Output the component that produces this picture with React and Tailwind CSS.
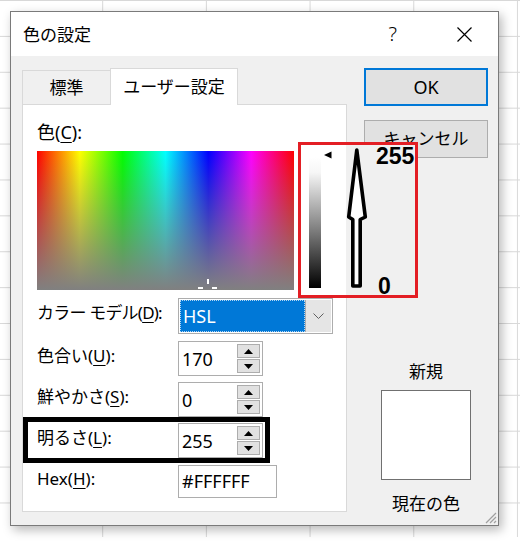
import React from "react";

const ui = "font-['Noto_Sans','Noto_Sans_CJK_JP',sans-serif]";

const Spin = () => (
	<div className="flex flex-col gap-[1px]">
		<div className="w-[23px] h-[14px] bg-[#e1e1e1] border border-[#adadad] flex items-center justify-center">
			<svg width="9" height="5" viewBox="0 0 9 5"><path d="M4.5 0L9 5H0Z" fill="#000" /></svg>
		</div>
		<div className="w-[23px] h-[14px] bg-[#e1e1e1] border border-[#adadad] flex items-center justify-center">
			<svg width="9" height="5" viewBox="0 0 9 5"><path d="M0 0H9L4.5 5Z" fill="#000" /></svg>
		</div>
	</div>
);

const NumField = ({ value }) => (
	<div className="w-[85px] h-[35px] bg-white border border-[#adadad] flex items-center pl-[3px] pr-[2px]">
		<span className="flex-1 text-[18px] leading-none">{value}</span>
		<Spin />
	</div>
);

const Label = ({ before, ul, after = "):", tight }) => (
	<div className={tight ? "w-[141px] text-[17px] tracking-[-0.8px] leading-[24px] pb-[6px] whitespace-nowrap" : "w-[141px] text-[17px] leading-[24px] pb-[6px] whitespace-nowrap"}>
		{before}(<span className="underline underline-offset-[3px]">{ul}</span>{after}
	</div>
);

const App = () => {
	return (
		<div className={`relative w-[520px] h-[555px] bg-white text-black ${ui}`}>
			{/* sheet grid behind the dialog */}
			<div className="h-[537px] pl-[10px] pt-[11px] bg-[linear-gradient(to_right,#d8d8d8_1px,transparent_1px),linear-gradient(to_bottom,#d8d8d8_1px,transparent_1px)] bg-[size:103.7px_35.9px] bg-[position:-1.5px_0]">
				<div className="relative w-[489px] h-[515px] border border-[#7a7a7a] bg-[#f0f0f0] shadow-[3px_4px_10px_rgba(0,0,0,0.28)] flex flex-col">
					{/* title bar */}
					<div className="h-[44px] bg-white flex items-center pl-[12px] pr-[26px]">
						<span className="text-[17px] leading-none">色の設定</span>
						<span className="ml-auto text-[20px] font-light leading-none">?</span>
						<svg className="ml-[60px]" width="15" height="15" viewBox="0 0 15 15">
							<path d="M0.5 0.5L14.5 14.5M14.5 0.5L0.5 14.5" stroke="#000" strokeWidth="1.2" />
						</svg>
					</div>

					<div className="flex pl-[11px] pt-[12px]">
						{/* tabs + panel */}
						<div className="w-[325px] flex flex-col">
							<div className="flex items-end h-[36px]">
								<div className="w-[88px] h-[34px] border-t border-l border-[#d9d9d9] flex items-center justify-center text-[17px]">標準</div>
								<div className="relative z-10 -mb-px w-[128px] h-[37px] bg-white border border-b-0 border-[#d9d9d9] flex items-center justify-center text-[17px]">ユーザー設定</div>
							</div>
							<div className="h-[408px] bg-white border border-[#d9d9d9] pl-[14px] pt-[15px]">
								<div className="text-[18px] leading-[24px]">
									色(<span className="underline underline-offset-[3px]">C</span>):
								</div>
								<div className="mt-[7px] flex items-start">
									<div className="relative w-[257px] h-[139px] bg-[linear-gradient(to_bottom,rgba(128,128,128,0),#808080),linear-gradient(to_right,#ff0000,#ffff00,#00ff00,#00ffff,#0000ff,#ff00ff,#ff0000)]">
										<div className="absolute left-[170px] top-[128px] w-[2px] h-[5px] bg-white" />
										<div className="absolute left-[161px] top-[136px] w-[5px] h-[2px] bg-white" />
										<div className="absolute left-[175px] top-[136px] w-[5px] h-[2px] bg-white" />
									</div>
									<div className="relative ml-[15px] mt-[6px] w-[12px] h-[131px] bg-[linear-gradient(to_bottom,#ffffff_0%,#f6f6f6_12%,#808080_55%,#000000_100%)]">
										<svg className="absolute left-[15px] top-[-6px]" width="8" height="8" viewBox="0 0 8 8">
											<path d="M0 4L7.5 0.5V7.5Z" fill="#000" />
										</svg>
									</div>
								</div>

								<div className="mt-[8px] flex items-center">
									<Label before="カラー モデル" ul="D" tight />
									<div className="w-[155px] h-[36px] border border-[#adadad] bg-white flex p-[1px]">
										<div className="flex-1 bg-[#0078d7] border border-dotted border-white/70 flex items-center pl-[2px] text-white text-[18px]">HSL</div>
										<div className="w-[26px] bg-[#e5e5e5] border-l border-[#adadad] flex items-center justify-center">
											<svg width="11" height="6" viewBox="0 0 11 6"><path d="M0.5 0.5L5.5 5.5L10.5 0.5" fill="none" stroke="#606060" strokeWidth="1" /></svg>
										</div>
									</div>
								</div>
								<div className="mt-[7px] flex items-center">
									<Label before="色合い" ul="U" />
									<NumField value="170" />
								</div>
								<div className="mt-[6px] flex items-center">
									<Label before="鮮やかさ" ul="S" />
									<NumField value="0" />
								</div>
								<div className="mt-[6px] flex items-center">
									<Label before="明るさ" ul="L" />
									<NumField value="255" />
								</div>
								<div className="mt-[7px] flex items-center">
									<Label before="Hex" ul="H" />
									<div className="w-[99px] h-[33px] bg-white border border-[#adadad] flex items-center pl-[3px] text-[18px]">#FFFFFF</div>
								</div>
							</div>
						</div>

						{/* buttons and preview */}
						<div className="ml-[17px] w-[124px] flex flex-col items-center">
							<button className="w-full h-[38px] bg-[#e1e1e1] border-2 border-[#0078d7] text-[18px]">OK</button>
							<button className="mt-[14px] w-full h-[38px] bg-[#e1e1e1] border border-[#adadad] text-[17px]">キャンセル</button>
							<div className="mt-[202px] text-[17px] leading-[24px]">新規</div>
							<div className="mt-[6px] w-[90px] h-[90px] bg-white border border-[#707070]" />
							<div className="mt-[12px] text-[17px] leading-[24px]">現在の色</div>
						</div>
					</div>

					{/* size grip */}
					<svg className="absolute right-[1px] bottom-[1px]" width="13" height="13" viewBox="0 0 13 13">
						<path d="M12 2L2 12M12 6L6 12M12 10L10 12" stroke="#a0a0a0" strokeWidth="1.2" />
					</svg>
				</div>
			</div>

			{/* annotations drawn over the screenshot */}
			<div className="absolute left-[298px] top-[142px] w-[120px] h-[156px] border-[3px] border-[#e31e24] bg-[linear-gradient(to_right,transparent_45px,#f0f0f0_45px)]" />
			<svg className="absolute left-[340px] top-[140px]" width="34" height="155" viewBox="0 0 34 155">
				<path d="M16.8 10L25.3 77L20.2 79.5V146H12.8V79.5L8.7 77Z" fill="#fff" stroke="#000" strokeWidth="3.6" strokeLinejoin="round" />
			</svg>
			<span className="absolute left-[376px] top-[145px] font-['Liberation_Sans',sans-serif] font-bold text-[23px] leading-none">255</span>
			<span className="absolute left-[378px] top-[275px] font-['Liberation_Sans',sans-serif] font-bold text-[23px] leading-none">0</span>
			<div className="absolute left-[23px] top-[417px] w-[247px] h-[46px] border-[5px] border-black" />
		</div>
	);
};

export default App;
